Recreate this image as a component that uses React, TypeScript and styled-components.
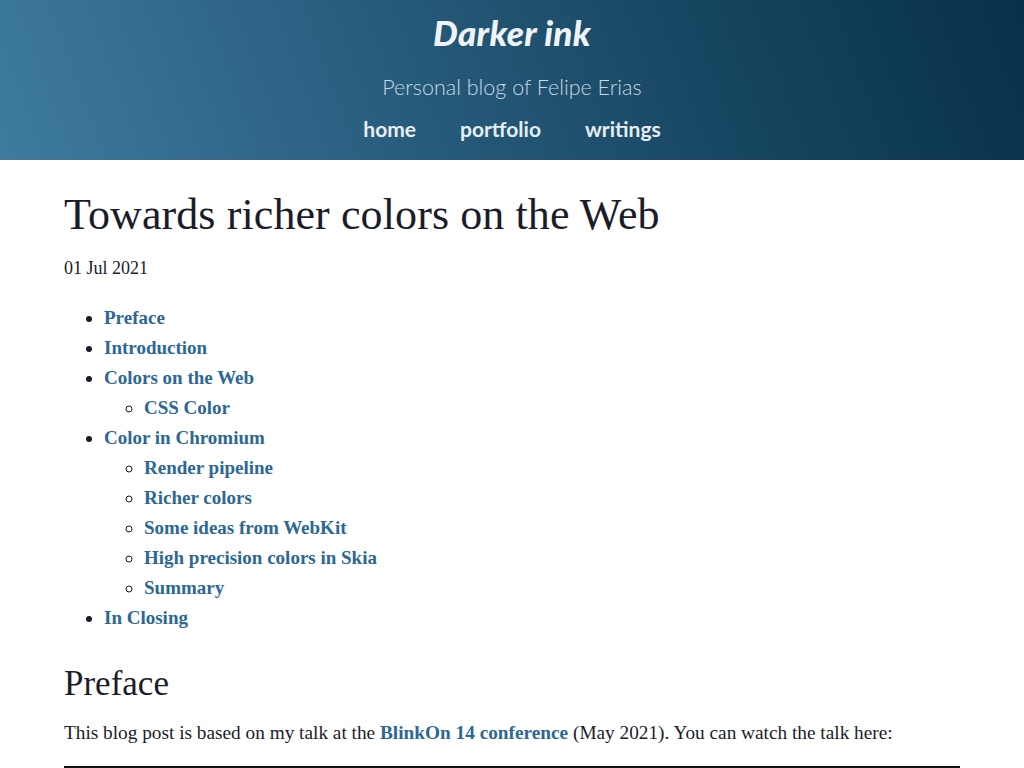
import React from "react";
import styled, { createGlobalStyle } from "styled-components";

const Global = createGlobalStyle`
  html, body { margin: 0; padding: 0; background: #fff; }
  body { font-family: "Liberation Serif", serif; color: #1c1c2b; }
`;

const Header = styled.header`
  height: 160px;
  box-sizing: border-box;
  background: linear-gradient(70deg, #3e7b9f 0%, #2a5f80 35%, #164560 70%, #08304a 100%);
  display: flex;
  flex-direction: column;
  align-items: center;
  padding-top: 12px;
  font-family: "Lato", "Noto Sans", sans-serif;
`;

const SiteTitle = styled.a`
  font-size: 35px;
  font-weight: 900;
  font-style: italic;
  color: #eef4f8;
  text-decoration: none;
  line-height: 40px;
  letter-spacing: 0.3px;
`;

const Subtitle = styled.div`
  margin-top: 22px;
  font-size: 21.5px;
  font-weight: 300;
  color: #c6d8e4;
  line-height: 26px;
`;

const Nav = styled.nav`
  margin-top: 16px;
  display: flex;
  gap: 44px;
`;

const NavLink = styled.a`
  font-size: 21px;
  font-weight: 700;
  color: #e6eef4;
  text-decoration: none;
  line-height: 26px;
`;

const Main = styled.main`
  max-width: 896px;
  margin: 0 auto;
  padding-top: 30px;
`;

const Title = styled.h1`
  margin: 0;
  font-size: 44px;
  font-weight: 400;
  line-height: 50px;
  color: #1b1c29;
  letter-spacing: 0.1px;
`;

const Date = styled.div`
  margin-top: 16px;
  font-size: 18px;
  line-height: 24px;
  color: #1b1c29;
`;

const List = styled.ul<{ $nested?: boolean }>`
  margin: ${(p) => (p.$nested ? "0" : "23px 0 0")};
  padding-left: 40px;
  list-style: ${(p) => (p.$nested ? "circle" : "disc")};
`;

const Item = styled.li`
  font-size: 19px;
  line-height: 30px;
  color: #1b1c29;
`;

const Link = styled.a`
  color: #2d6793;
  font-weight: 700;
  text-decoration: none;
`;

const Heading = styled.h2`
  margin: 31px 0 0;
  font-size: 35px;
  font-weight: 400;
  line-height: 40px;
  color: #1b1c29;
`;

const Para = styled.p`
  margin: 15px 0 0;
  font-size: 19.3px;
  line-height: 28px;
  color: #1b1c29;
`;

const Rule = styled.hr`
  margin: 19px 0 0;
  border: none;
  border-top: 2px solid #111;
`;

type Entry = { label: string; children?: string[] };

const toc: Entry[] = [
  { label: "Preface" },
  { label: "Introduction" },
  { label: "Colors on the Web", children: ["CSS Color"] },
  {
    label: "Color in Chromium",
    children: [
      "Render pipeline",
      "Richer colors",
      "Some ideas from WebKit",
      "High precision colors in Skia",
      "Summary",
    ],
  },
  { label: "In Closing" },
];

export default function App() {
  return (
    <>
      <Global />
      <Header>
        <SiteTitle href="#">Darker ink</SiteTitle>
        <Subtitle>Personal blog of Felipe Erias</Subtitle>
        <Nav>
          <NavLink href="#">home</NavLink>
          <NavLink href="#">portfolio</NavLink>
          <NavLink href="#">writings</NavLink>
        </Nav>
      </Header>
      <Main>
        <Title>Towards richer colors on the Web</Title>
        <Date>01 Jul 2021</Date>
        <List>
          {toc.map((e) => (
            <Item key={e.label}>
              <Link href="#">{e.label}</Link>
              {e.children && (
                <List $nested>
                  {e.children.map((c) => (
                    <Item key={c}>
                      <Link href="#">{c}</Link>
                    </Item>
                  ))}
                </List>
              )}
            </Item>
          ))}
        </List>
        <Heading>Preface</Heading>
        <Para>
          This blog post is based on my talk at the <Link href="#">BlinkOn 14 conference</Link> (May
          2021). You can watch the talk here:
        </Para>
        <Rule />
      </Main>
    </>
  );
}
